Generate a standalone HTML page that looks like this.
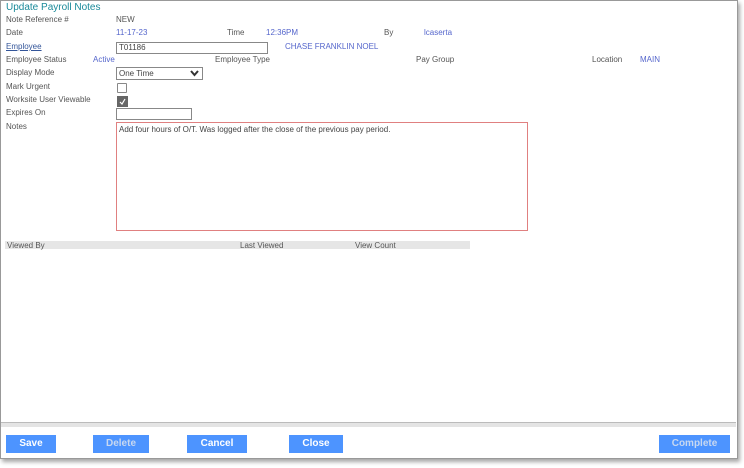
<!DOCTYPE html><html><head><style>
body{margin:0;width:744px;height:468px;background:#fff;font-family:"Liberation Sans",Verdana,sans-serif;font-size:8px;color:#555;position:relative;overflow:hidden}
.a{position:absolute;white-space:nowrap}
.v{color:#5566cc}
.win{position:absolute;left:0;top:0;width:736px;height:457px;border:1px solid #999;box-shadow:2px 3px 4px rgba(0,0,0,.35);background:#fff}
.btn{position:absolute;top:435px;height:18px;background:#4d94ff;color:#fff;font-weight:bold;font-size:10px;text-align:center;line-height:18px;font-family:"Liberation Sans",sans-serif}
.dis{color:#c8d8f0}
.box{position:absolute;border:1px solid #888;background:#fff}
</style></head><body>
<div class="win"></div>
<div class="a" style="left:6px;top:2px;font-size:10px;color:#1a8a9a">Update Payroll Notes</div>
<div class="a" style="left:6px;top:15px">Note Reference #</div><div class="a" style="left:116px;top:15px">NEW</div>
<div class="a" style="left:6px;top:28px">Date</div><div class="a v" style="left:116px;top:28px">11-17-23</div>
<div class="a" style="left:227px;top:28px">Time</div><div class="a v" style="left:266px;top:28px">12:36PM</div>
<div class="a" style="left:384px;top:28px">By</div><div class="a v" style="left:424px;top:28px">lcaserta</div>
<div class="a" style="left:6px;top:42px;color:#335599;text-decoration:underline">Employee</div>
<div class="box" style="left:116px;top:42px;width:150px;height:10px"><span style="position:absolute;left:2px;top:0;color:#444">T01186</span></div>
<div class="a v" style="left:285px;top:42px">CHASE FRANKLIN NOEL</div>
<div class="a" style="left:6px;top:55px">Employee Status</div><div class="a v" style="left:93px;top:55px">Active</div>
<div class="a" style="left:215px;top:55px">Employee Type</div>
<div class="a" style="left:416px;top:55px">Pay Group</div>
<div class="a" style="left:592px;top:55px">Location</div><div class="a v" style="left:640px;top:55px">MAIN</div>
<div class="a" style="left:6px;top:68px">Display Mode</div>
<div class="box" style="left:116px;top:67px;width:85px;height:11px"><span style="position:absolute;left:2px;top:1px;color:#444">One Time</span><svg style="position:absolute;right:3px;top:2px" width="9" height="7"><path d="M1 1L4.5 5L8 1" stroke="#333" stroke-width="2" fill="none"/></svg></div>
<div class="a" style="left:6px;top:82px">Mark Urgent</div>
<div class="box" style="left:117px;top:83px;width:8px;height:8px;border-radius:1px"></div>
<div class="a" style="left:6px;top:95px">Worksite User Viewable</div>
<div class="box" style="left:117px;top:96px;width:9px;height:9px;background:#666;border-color:#666"><svg width="9" height="9" style="position:absolute;left:0;top:0"><path d="M2 5L4 7L7 2" stroke="#fff" stroke-width="1.2" fill="none"/></svg></div>
<div class="a" style="left:6px;top:108px">Expires On</div>
<div class="box" style="left:116px;top:108px;width:74px;height:10px"></div>
<div class="a" style="left:6px;top:122px">Notes</div>
<div class="box" style="left:116px;top:122px;width:410px;height:107px;border-color:#e08080"><span style="position:absolute;left:2px;top:2px;color:#444">Add four hours of O/T. Was logged after the close of the previous pay period.</span></div>
<div style="position:absolute;left:5px;top:241px;width:465px;height:8px;background:#e6e6e6"></div>
<div class="a" style="left:7px;top:241px">Viewed By</div>
<div class="a" style="left:240px;top:241px">Last Viewed</div>
<div class="a" style="left:355px;top:241px">View Count</div>
<div style="position:absolute;left:1px;top:422px;width:735px;height:1px;background:#bbb"></div>
<div style="position:absolute;left:1px;top:423px;width:735px;height:4px;background:#e4e4e4"></div>
<div class="btn" style="left:6px;width:50px">Save</div>
<div class="btn dis" style="left:93px;width:56px">Delete</div>
<div class="btn" style="left:187px;width:60px">Cancel</div>
<div class="btn" style="left:289px;width:54px">Close</div>
<div class="btn dis" style="left:659px;width:71px">Complete</div>
</body></html>
